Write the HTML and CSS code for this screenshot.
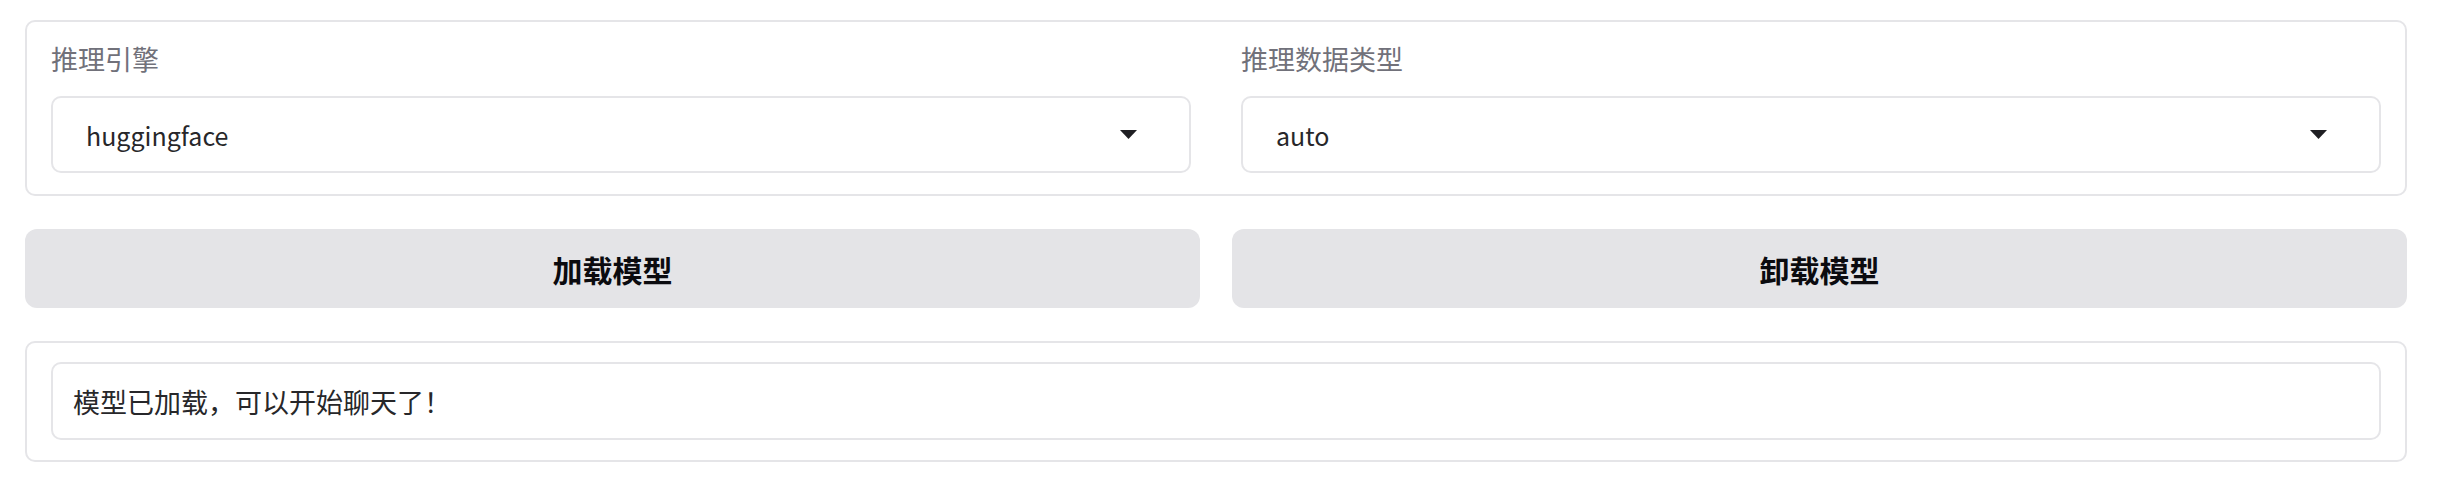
FILE: index.html
```html
<!DOCTYPE html>
<html lang="zh-CN">
<head>
<meta charset="utf-8">
<title>模型加载</title>
<link rel="stylesheet" href="styles.css">
</head>
<body>
<main class="page">
  <section class="panel form-row">
    <div class="field">
      <label class="field-label">推理引擎</label>
      <div class="select">
        <span class="select-value">huggingface</span>
        <svg class="caret" width="17" height="9" viewBox="0 0 17 9"><polygon points="0,0 17,0 8.5,9" fill="#1f1f23"/></svg>
      </div>
    </div>
    <div class="field">
      <label class="field-label">推理数据类型</label>
      <div class="select">
        <span class="select-value">auto</span>
        <svg class="caret" width="17" height="9" viewBox="0 0 17 9"><polygon points="0,0 17,0 8.5,9" fill="#1f1f23"/></svg>
      </div>
    </div>
  </section>
  <section class="button-row">
    <button class="btn">加载模型</button>
    <button class="btn">卸载模型</button>
  </section>
  <section class="panel status-panel">
    <div class="status-box">模型已加载，可以开始聊天了！</div>
  </section>
</main>
</body>
</html>
```
FILE: styles.css
```css
* { box-sizing: border-box; }
html, body { margin: 0; padding: 0; background: #ffffff; }
body {
  font-family: "Noto Sans CJK SC", "Noto Sans", sans-serif;
  color: #27272a;
}
.page {
  padding: 20px 33px 20px 25px;
  display: flex;
  flex-direction: column;
  gap: 33px;
}
.panel {
  border: 2px solid #e5e5e8;
  border-radius: 10px;
  background: #fff;
}
.form-row {
  display: grid;
  grid-template-columns: 1fr 1fr;
  column-gap: 50px;
  padding: 21px 24px 21px;
}
.field { display: flex; flex-direction: column; gap: 21px; }
.field-label {
  font-size: 27px;
  line-height: 32px;
  color: #71717a;
}
.select {
  height: 77px;
  border: 2px solid #e5e5e8;
  border-radius: 10px;
  display: flex;
  align-items: center;
  justify-content: space-between;
  padding: 0 52px 0 33px;
}
.select-value { font-size: 25px; color: #27272a; }
.caret { display: block; }
.button-row {
  display: grid;
  grid-template-columns: 1fr 1fr;
  column-gap: 32px;
}
.btn {
  height: 79px;
  border: none;
  border-radius: 12px;
  background: #e4e4e7;
  font-family: "Noto Sans CJK SC", "Noto Sans", sans-serif;
  font-size: 30px;
  font-weight: 700;
  color: #0b0b0f;
  padding: 0;
}
.status-panel { padding: 19px 24px 20px; }
.status-box {
  height: 78px;
  border: 2px solid #e5e5e8;
  border-radius: 10px;
  display: flex;
  align-items: center;
  padding: 0 20px;
  font-size: 27px;
  color: #27272a;
}
```
